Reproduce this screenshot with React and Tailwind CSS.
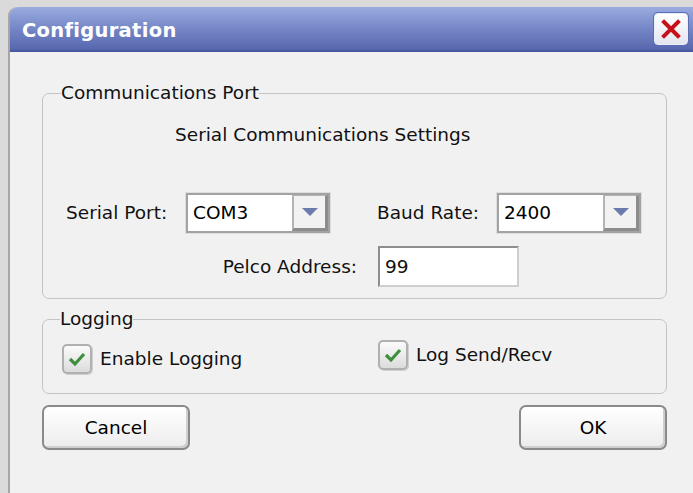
import React from 'react';

const font = { fontFamily: '"DejaVu Sans", Verdana, sans-serif' };

const CloseButton = () => (
  <div className="w-[34px] h-[32px] rounded-[4px] border border-[#e8eefc] bg-gradient-to-b from-[#ffffff] to-[#e4e6ee] shadow-[0_0_0_1px_#5a6cb4] flex items-center justify-center">
    <svg width="20" height="20" viewBox="0 0 20 20">
      <path d="M3 3 L17 17 M17 3 L3 17" stroke="#c8101a" strokeWidth="4" strokeLinecap="square" />
    </svg>
  </div>
);

const Combo = ({ value }) => (
  <div className="w-[144px] h-[40px] border-2 border-[#a3a3a3] bg-white flex items-stretch shadow-[0_0_0_1px_#dedede]">
    <div className="flex-1 pl-[5px] flex items-center text-black">{value}</div>
    <div className="w-[36px] border-l-2 border-t border-[#b4b4b4] border-r-[3px] border-b-[3px] border-r-[#8c8c8c] border-b-[#8c8c8c] bg-[#f2f2f2] flex items-center justify-center">
      <svg width="16" height="9" viewBox="0 0 16 9">
        <path d="M0 0 H16 L8 8 Z" fill="#6b7bab" />
      </svg>
    </div>
  </div>
);

const Check = () => (
  <div className="w-[30px] h-[30px] rounded-[5px] border-2 border-[#b0b0b0] bg-gradient-to-b from-[#fbfbfb] to-[#dcdcdc] flex items-center justify-center shadow-[1px_1px_0_#d0d0d0]">
    <svg width="18" height="16" viewBox="0 0 18 16">
      <path d="M2 8 L7 13 L16 3" stroke="#3f8f3f" strokeWidth="3.2" fill="none" />
    </svg>
  </div>
);

const Button = ({ children }) => (
  <button className="w-[148px] h-[45px] rounded-[7px] border-2 border-[#8a8a8a] bg-gradient-to-b from-[#ffffff] to-[#ececec] shadow-[inset_-2px_-2px_0_#cfcfcf] text-black flex items-center justify-center">
    {children}
  </button>
);

export default function App() {
  return (
    <div className="w-[693px] h-[493px] overflow-hidden bg-[#dadada] pt-[7px] pl-[8px]" style={font}>
      <div className="h-[520px] rounded-tl-[9px] border-l-2 border-[#a6a6a6] bg-[#f1f1f1] flex flex-col">
        {/* title bar */}
        <div className="h-[45px] rounded-tl-[8px] bg-gradient-to-b from-[#9aace0] via-[#7587c6] to-[#5666ae] border-b-2 border-[#4a5aa0] flex items-center justify-between pl-[12px] pr-[5px]">
          <span className="text-white font-bold text-[19.5px] tracking-[0.3px] pt-[5px]">Configuration</span>
          <CloseButton />
        </div>

        <div className="pl-[32px] pr-[26px] pt-[30px] text-[18.5px] text-[#111]">
          {/* communications port */}
          <fieldset className="border border-[#c4c4c4] rounded-[7px] pb-[11px]">
            <legend className="ml-[18px] leading-[22px]">Communications Port</legend>
            <div className="mt-[20px] pl-[132px] leading-[22px]">Serial Communications Settings</div>
            <div className="mt-[47px] flex items-center">
              <span className="w-[143px] pl-[23px] leading-[22px]">Serial Port:</span>
              <Combo value="COM3" />
              <span className="w-[167px] pl-[47px] leading-[22px]">Baud Rate:</span>
              <Combo value="2400" />
            </div>
            <div className="mt-[13px] flex items-center">
              <span className="w-[335px] pr-[21px] text-right leading-[22px]">Pelco Address:</span>
              <div className="w-[141px] h-[41px] border-2 border-t-[#8e8e8e] border-l-[#8e8e8e] border-r-[#cfcfcf] border-b-[#cfcfcf] bg-white pl-[5px] flex items-center">99</div>
            </div>
          </fieldset>

          {/* logging */}
          <fieldset className="mt-[9px] border border-[#c4c4c4] rounded-[7px] h-[86px]">
            <legend className="ml-[17px] leading-[22px]">Logging</legend>
            <div className="flex items-start">
              <div className="w-[335px] pl-[19px] pt-[14px] flex items-center gap-[8px]">
                <Check />
                <span>Enable Logging</span>
              </div>
              <div className="pt-[10px] flex items-center gap-[8px]">
                <Check />
                <span>Log Send/Recv</span>
              </div>
            </div>
          </fieldset>

          <div className="mt-[11px] flex justify-between">
            <Button>Cancel</Button>
            <Button>OK</Button>
          </div>
        </div>
      </div>
    </div>
  );
}
